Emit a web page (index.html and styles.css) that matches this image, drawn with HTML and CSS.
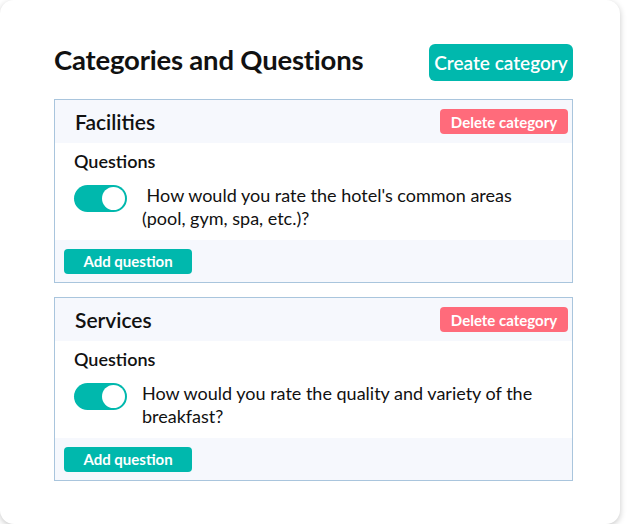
FILE: index.html
```html
<!DOCTYPE html>
<html lang="en">
<head>
<meta charset="UTF-8">
<meta name="viewport" content="width=device-width, initial-scale=1.0">
<title>Categories and Questions</title>
<link rel="stylesheet" href="styles.css">
</head>
<body>
<div class="panel">
  <div class="panel-head">
    <h1 class="title">Categories and Questions</h1>
    <button class="btn btn-create">Create category</button>
  </div>

  <div class="category">
    <div class="category-head">
      <span class="category-name">Facilities</span>
      <button class="btn btn-delete">Delete category</button>
    </div>
    <div class="category-body">
      <div class="questions-label">Questions</div>
      <div class="question">
        <span class="toggle on"><span class="knob"></span></span>
        <span class="question-text">&nbsp;How would you rate the hotel's common areas (pool, gym, spa, etc.)?</span>
      </div>
    </div>
    <div class="category-foot">
      <button class="btn btn-add">Add question</button>
    </div>
  </div>

  <div class="category">
    <div class="category-head">
      <span class="category-name">Services</span>
      <button class="btn btn-delete">Delete category</button>
    </div>
    <div class="category-body">
      <div class="questions-label">Questions</div>
      <div class="question">
        <span class="toggle on"><span class="knob"></span></span>
        <span class="question-text">How would you rate the quality and variety of the breakfast?</span>
      </div>
    </div>
    <div class="category-foot">
      <button class="btn btn-add">Add question</button>
    </div>
  </div>
</div>
</body>
</html>
```

FILE: styles.css
```css
body {
  margin: 0;
  background-color: #ffffff;
  font-family: Lato, "Liberation Sans", Arial, sans-serif;
  color: #111111;
}

.panel {
  width: 620px;
  height: 524px;
  box-sizing: border-box;
  padding: 44px 47px 0 54px;
  background-color: #ffffff;
  border-radius: 14px;
  box-shadow: 0 2px 6px rgba(0, 0, 0, 0.22);
}

.panel-head {
  display: flex;
  justify-content: space-between;
  align-items: flex-start;
  height: 37px;
  margin-bottom: 18px;
}

.title {
  margin: 0;
  font-size: 27.5px;
  line-height: 31px;
  font-weight: 700;
  letter-spacing: -0.2px;
}

.btn {
  font-family: inherit;
  font-weight: 700;
  color: #ffffff;
  border: none;
  cursor: pointer;
  padding: 0;
}

.btn-create {
  width: 144px;
  height: 37px;
  font-size: 19px;
  font-weight: 600;
  border-radius: 6px;
  background-color: #00b8ad;
}

.category {
  border: 1px solid #a9c5dd;
  margin-bottom: 14px;
}

.category-head {
  display: flex;
  justify-content: space-between;
  align-items: center;
  height: 43px;
  padding: 0 4px 0 20px;
  background-color: #f6f8fd;
}

.category-name {
  font-size: 21px;
  font-weight: 600;
}

.btn-delete {
  width: 128px;
  height: 25px;
  font-size: 15px;
  border-radius: 4px;
  background-color: #ff6b7b;
}

.category-body {
  padding: 7px 18px 10px 19px;
}

.questions-label {
  font-size: 18px;
  font-weight: 600;
  line-height: 22px;
  margin-bottom: 12px;
}

.question {
  display: flex;
  align-items: flex-start;
  gap: 15px;
}

.toggle {
  flex: none;
  width: 53px;
  height: 27px;
  box-sizing: border-box;
  border-radius: 14px;
  background-color: #00b8ad;
  position: relative;
  margin-top: 1px;
}

.knob {
  position: absolute;
  top: 2px;
  right: 2px;
  width: 23px;
  height: 23px;
  border-radius: 50%;
  background-color: #ffffff;
}

.question-text {
  font-size: 18px;
  line-height: 23px;
  color: #111111;
}

.category-foot {
  height: 42px;
  display: flex;
  align-items: center;
  padding-left: 9px;
  background-color: #f6f8fd;
}

.btn-add {
  width: 128px;
  height: 25px;
  font-size: 15px;
  border-radius: 4px;
  background-color: #00b8ad;
}
```
